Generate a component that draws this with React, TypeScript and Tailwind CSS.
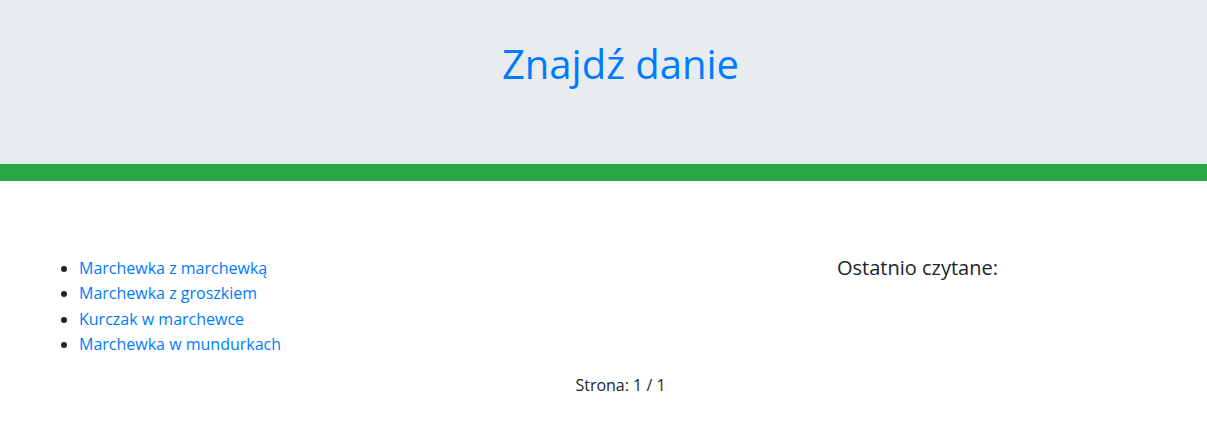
export default function App() {
  const items = [
    "Marchewka z marchewką",
    "Marchewka z groszkiem",
    "Kurczak w marchewce",
    "Marchewka w mundurkach",
  ];
  return (
    <div className="min-h-[423px] bg-white text-[#212529]" style={{ fontFamily: '"Open Sans", "Noto Sans", sans-serif' }}>
      <header className="h-[164px] bg-[#e9ecef] flex justify-center pl-[34px] pt-[40px]">
        <h1 className="text-[40px] leading-[1.2] font-normal text-[#007bff]">Znajdź danie</h1>
      </header>
      <div className="h-[17px] bg-[#28a745]" />
      <div className="flex pt-[75px] pl-[39px]">
        <div className="w-[798px]">
          <ul className="list-disc pl-[40px] text-[16px] leading-[25.3px]">
            {items.map((t) => (
              <li key={t}>
                <a className="text-[#007bff]" href="#">{t}</a>
              </li>
            ))}
          </ul>
        </div>
        <div>
          <h5 className="text-[20px] leading-[1.2]">Ostatnio czytane:</h5>
        </div>
      </div>
      <div className="flex justify-center pl-[34px] pt-[16px]">
        <span className="text-[16px] leading-[24px]">Strona: 1 / 1</span>
      </div>
    </div>
  );
}
